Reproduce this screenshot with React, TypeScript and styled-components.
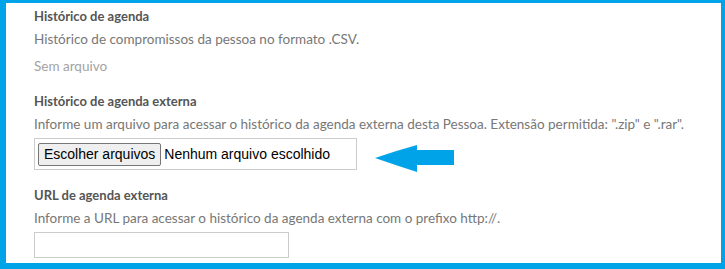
import React from "react";
import styled, { createGlobalStyle } from "styled-components";

const GlobalStyle = createGlobalStyle`
  html, body {
    margin: 0;
    padding: 0;
    background: #ffffff;
  }
  body {
    font-family: Lato, "Open Sans", sans-serif;
  }
`;

const Frame = styled.div`
  box-sizing: border-box;
  width: 725px;
  height: 269px;
  border-style: solid;
  border-color: #00a3e8;
  border-width: 3px 4px 6px 6px;
  padding: 4px 0 0 28px;
  overflow: hidden;
`;

const Section = styled.div<{ $gap?: number }>`
  display: flex;
  flex-direction: column;
  margin-bottom: ${(p) => p.$gap ?? 16}px;
`;

const Label = styled.div`
  font-size: 13px;
  line-height: 18px;
  font-weight: 700;
  color: #555555;
  margin-bottom: 5px;
`;

const Description = styled.div<{ $muted?: boolean; $space?: number }>`
  font-size: 13.5px;
  line-height: 18px;
  color: ${(p) => (p.$muted ? "#a3a3a3" : "#777777")};
  margin-bottom: ${(p) => p.$space ?? 0}px;
`;

const FileRow = styled.div`
  display: flex;
  align-items: flex-start;
  gap: 18px;
`;

const FileBox = styled.div`
  box-sizing: border-box;
  width: 323px;
  height: 32px;
  border: 1px solid #cccccc;
  display: flex;
  align-items: center;
  padding-left: 3px;
  font-family: "Liberation Sans", Arial, sans-serif;
  font-size: 14px;
  color: #000000;
`;

const FileButton = styled.div`
  box-sizing: border-box;
  height: 23px;
  padding: 0 5px;
  display: flex;
  align-items: center;
  background: #efefef;
  border: 1px solid #767676;
  border-radius: 2px;
  margin-right: 3px;
`;

const Arrow = styled.svg`
  margin-top: 6px;
  flex: none;
`;

const TextInput = styled.div`
  box-sizing: border-box;
  width: 255px;
  height: 26px;
  border: 1px solid #cccccc;
  background: #ffffff;
`;

export default function App() {
  return (
    <>
      <GlobalStyle />
      <Frame>
        <Section $gap={17}>
          <Label>Histórico de agenda</Label>
          <Description $space={9}>Histórico de compromissos da pessoa no formato .CSV.</Description>
          <Description $muted>Sem arquivo</Description>
        </Section>
        <Section $gap={13}>
          <Label>Histórico de agenda externa</Label>
          <Description $space={5}>
            Informe um arquivo para acessar o histórico da agenda externa desta Pessoa. Extensão permitida: ".zip" e ".rar".
          </Description>
          <FileRow>
            <FileBox>
              <FileButton>Escolher arquivos</FileButton>
              <span>Nenhum arquivo escolhido</span>
            </FileBox>
            <Arrow width="80" height="29" viewBox="0 0 80 29">
              <path
                d="M0 14 Q20 7 42 1 L42 6 L79 6 L79 21 L42 21 L42 28 Q20 21 0 14 Z"
                fill="#00a3e8"
              />
            </Arrow>
          </FileRow>
        </Section>
        <Section $gap={0}>
          <Label>URL de agenda externa</Label>
          <Description $space={5}>
            Informe a URL para acessar o histórico da agenda externa com o prefixo http://.
          </Description>
          <TextInput />
        </Section>
      </Frame>
    </>
  );
}
